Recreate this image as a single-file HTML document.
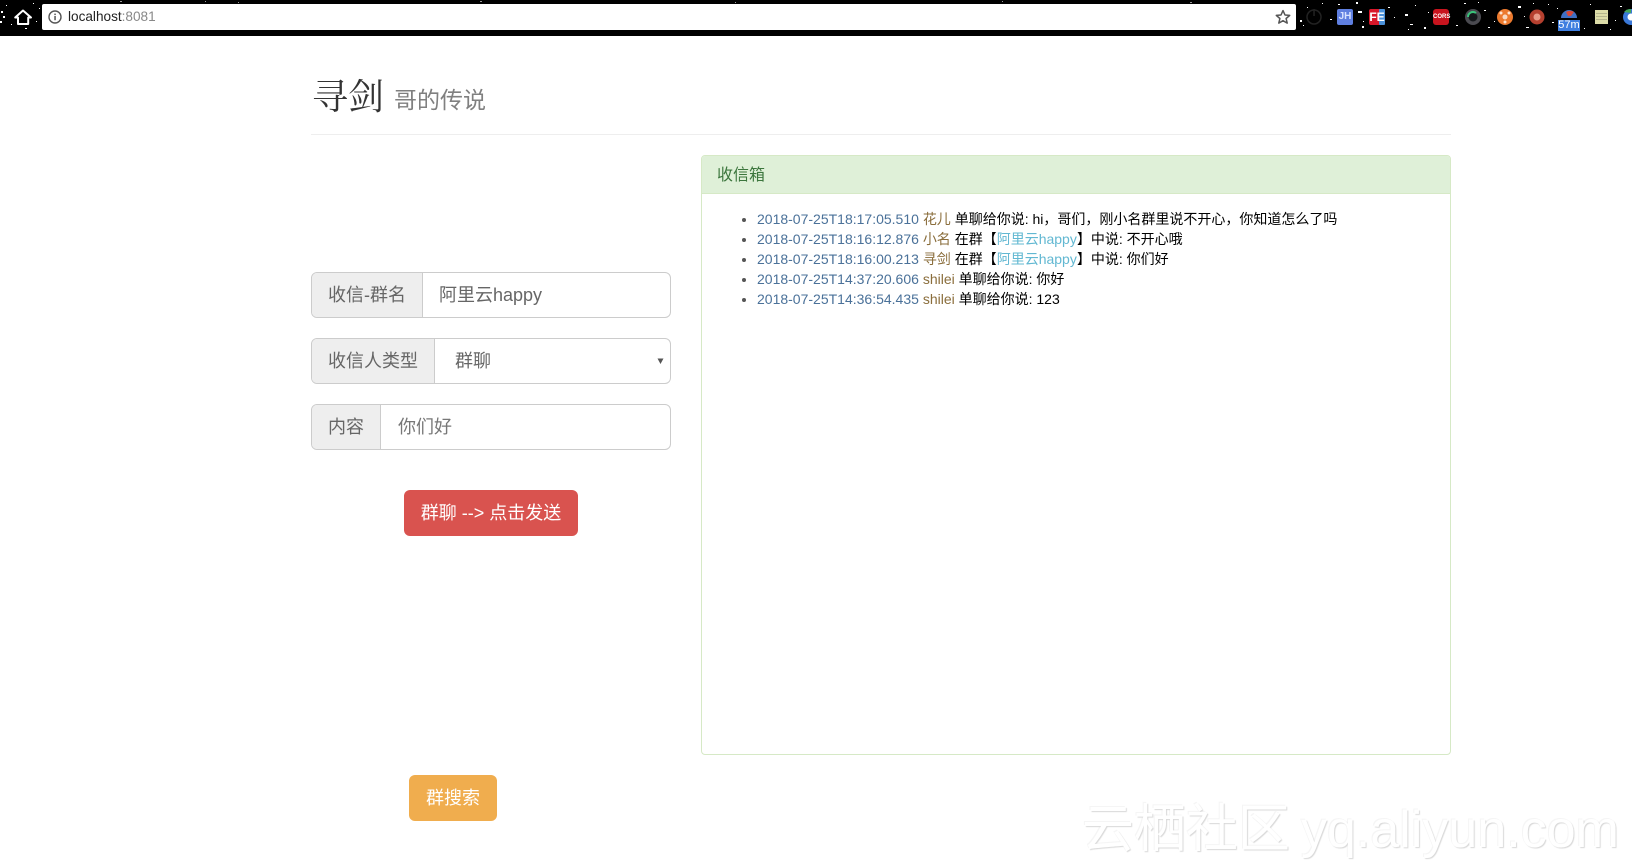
<!DOCTYPE html>
<html lang="zh">
<head>
<meta charset="utf-8">
<title>寻剑</title>
<style>
html,body{margin:0;padding:0;background:#fff;width:1632px;height:867px;overflow:hidden}
body{position:relative;font-family:"Liberation Sans","Noto Sans CJK SC",sans-serif;font-size:14px;color:#000}
.a{position:absolute;box-sizing:border-box;white-space:nowrap}
#bar{left:0;top:0;width:1632px;height:36px;background:#000}
#url{left:42px;top:4px;width:1254px;height:26px;background:#fff;border-radius:2px}
#urltext{left:68px;top:9px;font-size:13.6px;line-height:16px;color:#222}
#urltext span{color:#888}
h1{margin:0;font-weight:400;position:absolute;left:312px;top:75px;line-height:44px;font-size:36px;color:#333;font-family:"Liberation Serif","Noto Serif CJK SC",serif;white-space:nowrap}
h1 small{font-size:23px;color:#808080;margin-left:10px;position:relative;top:-1px;font-family:"Liberation Sans","Noto Sans CJK SC",sans-serif}
#hr{left:311px;top:134px;width:1140px;height:1px;background:#eee}
.grp{left:311px;width:360px;height:46px;border:1px solid #ccc;border-radius:6px;background:#fff;font-size:18px;line-height:44px;color:#666;overflow:hidden}
.add{position:absolute;left:0;top:0;height:44px;background:#eee;border-right:1px solid #ccc;text-align:center}
.val{position:absolute;top:0;line-height:44px}
.btn{border-radius:6px;color:#fff;font-size:18px;line-height:46px;text-align:center}
#panel{left:701px;top:155px;width:750px;height:600px;border:1px solid #d6e9c6;border-radius:4px;background:#fff}
#head{left:0;top:0;width:748px;height:38px;background:#dff0d8;border-bottom:1px solid #d6e9c6;color:#3c763d;font-size:16px;line-height:39px;padding-left:15px;border-radius:3px 3px 0 0}
ul{position:absolute;left:15px;top:54.5px;margin:0;padding:0 0 0 40px;line-height:19.85px;font-size:14px;white-space:nowrap;color:#000}
li:first-child{position:relative;top:-1px}
li::marker{color:#555}
.d{color:#4a7199}.n{color:#8a6d3b}.g{color:#62b8d2}
#wm{left:1082px;top:797px;font-size:52px;line-height:66px;color:#fff;text-shadow:1px 1px 1px #d8d8d8,-1px -1px 0 #f5f5f5}
#wm b{font-weight:400;font-size:52px;margin-left:11px}
</style>
</head>
<body>
<div class="a" id="bar"></div>
<svg class="a" style="left:0;top:0" width="1632" height="36" viewBox="0 0 1632 36">
<g fill="#fff">
<rect x="1" y="11" width="2" height="2"/><rect x="3" y="16" width="2" height="2"/><rect x="0" y="21" width="2" height="2"/><rect x="6" y="5" width="1" height="1"/><rect x="11" y="24" width="1" height="1"/><rect x="25" y="28" width="2" height="1"/><rect x="36" y="21" width="1" height="1"/><rect x="39" y="8" width="1" height="1"/><rect x="33" y="3" width="1" height="1"/><rect x="120" y="1" width="2" height="1" opacity=".6"/><rect x="205" y="1" width="1" height="1" opacity=".6"/><rect x="238" y="2" width="1" height="1" opacity=".6"/><rect x="480" y="1" width="2" height="1" opacity=".6"/><rect x="735" y="2" width="1" height="1" opacity=".6"/><rect x="1002" y="1" width="1" height="1" opacity=".6"/><rect x="1190" y="2" width="2" height="1" opacity=".6"/>
<rect x="1300" y="20" width="2" height="2"/><rect x="1303" y="25" width="1" height="1"/><rect x="1307" y="7" width="1" height="1"/><rect x="1322" y="3" width="1" height="1"/><rect x="1330" y="19" width="2" height="1"/><rect x="1338" y="4" width="2" height="1"/><rect x="1356" y="2" width="2" height="2"/><rect x="1358" y="11" width="4" height="2"/><rect x="1363" y="21" width="1" height="1"/><rect x="1362" y="26" width="2" height="2"/><rect x="1388" y="7" width="2" height="1"/><rect x="1394" y="17" width="1" height="1"/><rect x="1405" y="14" width="3" height="2"/><rect x="1410" y="24" width="3" height="1"/><rect x="1415" y="5" width="1" height="1"/><rect x="1408" y="29" width="1" height="1"/><rect x="1424" y="27" width="2" height="2"/><rect x="1428" y="12" width="1" height="1"/>
<rect x="1456" y="25" width="2" height="1"/><rect x="1464" y="3" width="2" height="1"/><rect x="1478" y="2" width="1" height="1"/><rect x="1484" y="10" width="2" height="1"/><rect x="1488" y="27" width="2" height="1"/><rect x="1494" y="21" width="1" height="1"/><rect x="1518" y="6" width="3" height="2"/><rect x="1524" y="16" width="1" height="1"/><rect x="1526" y="27" width="3" height="1"/><rect x="1533" y="3" width="1" height="1"/><rect x="1548" y="4" width="1" height="1"/><rect x="1552" y="22" width="2" height="1"/><rect x="1557" y="8" width="1" height="1"/><rect x="1584" y="28" width="1" height="1"/><rect x="1590" y="4" width="1" height="1"/><rect x="1615" y="20" width="1" height="1"/><rect x="1620" y="6" width="2" height="1"/><rect x="1610" y="29" width="1" height="1"/>
</g>
<!-- home -->
<path d="M23 10.5 L31 17.5 H28.2 V24 H18 V17.5 H15.2 Z" fill="none" stroke="#fff" stroke-width="2" stroke-linejoin="round"/>
<!-- extensions -->
<circle cx="1314" cy="17" r="7" fill="none" stroke="#222" stroke-width="1.5"/>
<rect x="1313.3" y="9" width="1.5" height="7" fill="#222"/>
<rect x="1337" y="9" width="16" height="16" rx="2" fill="#5f7fe0"/>
<rect x="1369" y="9" width="16" height="16" rx="2" fill="#d8182a"/>
<rect x="1379" y="9" width="6" height="16" rx="1" fill="#4a90d9"/>
<rect x="1433" y="9" width="16" height="16" rx="3" fill="#c8141e"/>
<circle cx="1473" cy="17" r="8" fill="#4a4a50"/><circle cx="1473" cy="17" r="4.5" fill="#15181c"/>
<path d="M1468 17 A5 5 0 0 1 1476 13" fill="none" stroke="#3ac27a" stroke-width="2"/>
<circle cx="1505" cy="17" r="8" fill="#ec7a2e"/><circle cx="1505" cy="17" r="2.5" fill="#f8d9c0"/><circle cx="1501" cy="13" r="1.5" fill="#fde6d4"/><circle cx="1509" cy="13" r="1.5" fill="#fde6d4"/><circle cx="1505" cy="22" r="1.5" fill="#fde6d4"/>
<circle cx="1537" cy="17" r="7.5" fill="#b5402f"/><circle cx="1537" cy="17" r="3.5" fill="#e89a88"/>
<path d="M1561 18 A8 8 0 0 1 1577 18 Z" fill="#3f6fc4"/><path d="M1566 12 A7 7 0 0 1 1574 12 L1571 16 H1568 Z" fill="#d8483a"/>
<rect x="1558" y="20" width="22" height="11" fill="#3f7fe0"/>
<rect x="1595" y="10" width="13" height="14" fill="#dcdca8"/>
<g fill="#b4b48c"><rect x="1596" y="13" width="11" height="1"/><rect x="1596" y="16" width="11" height="1"/><rect x="1596" y="19" width="11" height="1"/></g>
<circle cx="1631" cy="17" r="8" fill="#3a78d8"/><circle cx="1631" cy="17" r="3.5" fill="#fff"/><path d="M1624 12 A8 8 0 0 1 1631 9 V13 Z" fill="#45a85a"/>
</svg>
<span class="a" style="left:1337px;top:9px;width:16px;text-align:center;font:700 10px/16px 'Liberation Sans',sans-serif;color:#d8e2ff">JH</span>
<span class="a" style="left:1369px;top:9px;width:16px;text-align:center;font:700 12px/16px 'Liberation Sans',sans-serif;color:#fff">FE</span>
<span class="a" style="left:1433px;top:9px;width:16px;text-align:center;font:700 6px/16px 'Liberation Sans',sans-serif;color:#fff">CORS</span>
<span class="a" style="left:1558px;top:20px;width:22px;text-align:center;font:400 11px/11px 'Liberation Sans',sans-serif;color:#fff">57m</span>

<div class="a" id="url"></div>
<svg class="a" style="left:47px;top:9px" width="16" height="16" viewBox="0 0 16 16">
<circle cx="8" cy="8" r="6" fill="none" stroke="#555" stroke-width="1.4"/>
<rect x="7.3" y="7" width="1.5" height="4.2" fill="#555"/><rect x="7.3" y="4.6" width="1.5" height="1.5" fill="#555"/>
</svg>
<div class="a" id="urltext">localhost<span>:8081</span></div>
<svg class="a" style="left:1274px;top:8px" width="18" height="18" viewBox="0 0 18 18">
<path d="M9 2.6 L11 7 L15.7 7.4 L12.1 10.5 L13.2 15.1 L9 12.7 L4.8 15.1 L5.9 10.5 L2.3 7.4 L7 7 Z" fill="none" stroke="#555" stroke-width="1.5" stroke-linejoin="round"/>
</svg>

<h1>寻剑<small>哥的传说</small></h1>
<div class="a" id="hr"></div>

<div class="a grp" style="top:272px">
  <div class="add" style="width:110px">收信-群名</div>
  <div class="val" style="left:127px">阿里云happy</div>
</div>
<div class="a grp" style="top:338px">
  <div class="add" style="width:122px">收信人类型</div>
  <div class="val" style="left:143px">群聊</div>
  <svg style="position:absolute;left:345px;top:19px" width="8" height="7" viewBox="0 0 8 7"><path d="M0.5 0.5 H6.5 L3.5 6 Z" fill="#555"/></svg>
</div>
<div class="a grp" style="top:404px">
  <div class="add" style="width:68px">内容</div>
  <div class="val" style="left:86px;color:#777">你们好</div>
</div>

<div class="a btn" style="left:404px;top:490px;width:174px;height:46px;background:#d9534f">群聊 --&gt; 点击发送</div>
<div class="a btn" style="left:409px;top:775px;width:88px;height:46px;background:#f0ad4e">群搜索</div>

<div class="a" id="panel">
  <div class="a" id="head">收信箱</div>
  <ul>
    <li><span class="d">2018-07-25T18:17:05.510</span> <span class="n">花儿</span> 单聊给你说: hi，哥们，刚小名群里说不开心，你知道怎么了吗</li>
    <li><span class="d">2018-07-25T18:16:12.876</span> <span class="n">小名</span> 在群【<span class="g">阿里云happy</span>】中说: 不开心哦</li>
    <li><span class="d">2018-07-25T18:16:00.213</span> <span class="n">寻剑</span> 在群【<span class="g">阿里云happy</span>】中说: 你们好</li>
    <li><span class="d">2018-07-25T14:37:20.606</span> <span class="n">shilei</span> 单聊给你说: 你好</li>
    <li><span class="d">2018-07-25T14:36:54.435</span> <span class="n">shilei</span> 单聊给你说: 123</li>
  </ul>
</div>

<div class="a" id="wm">云栖社区<b>yq.aliyun.com</b></div>
</body>
</html>
